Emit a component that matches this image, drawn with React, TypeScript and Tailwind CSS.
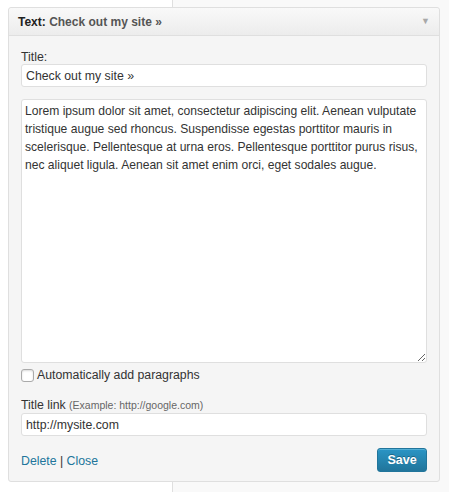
import { useState } from "react";

const FONT = { fontFamily: '"Liberation Sans", Arial, Helvetica, sans-serif' };

export default function App() {
    const [title, setTitle] = useState("Check out my site »");
    const [link, setLink] = useState("http://mysite.com");
    const [autoP, setAutoP] = useState(false);
    const [body, setBody] = useState(
        "Lorem ipsum dolor sit amet, consectetur adipiscing elit. Aenean vulputate tristique augue sed rhoncus. Suspendisse egestas porttitor mauris in scelerisque. Pellentesque at urna eros. Pellentesque porttitor purus risus, nec aliquet ligula. Aenean sit amet enim orci, eget sodales augue."
    );

    return (
        <div
            style={FONT}
            className="w-[449px] h-[492px] pt-[7px] pl-[8px] text-[12.3px] text-[#333] bg-[linear-gradient(to_right,#ffffff_172px,#dfdfdf_172px,#dfdfdf_173px,#f9f9f9_173px)]"
        >
            <div className="w-[432px] h-[475px] flex flex-col border border-[#dfdfdf] rounded-[3px] bg-[#f5f5f5]">
                {/* header */}
                <div className="h-[28px] shrink-0 flex items-center justify-between pl-[9px] pr-[9px] border-b border-[#dfdfdf] rounded-t-[3px] bg-[linear-gradient(to_bottom,#f9f9f9,#ececec)]">
                    <h3 className="font-bold text-[12px] leading-none text-[#222]">
                        Text: <span className="text-[#555]">Check out my site »</span>
                    </h3>
                    <span className="text-[#a8a8a8] text-[9px] leading-none">▼</span>
                </div>

                {/* body */}
                <div className="flex flex-col flex-1 px-[12px] pt-[14px]">
                    <label className="leading-[14px]">Title:</label>
                    <input
                        value={title}
                        onChange={(e) => setTitle(e.target.value)}
                        className="w-[406px] h-[23px] px-[4px] bg-white border border-[#dfdfdf] rounded-[3px] outline-none text-[12.3px] text-[#333]"
                    />

                    <textarea
                        value={body}
                        onChange={(e) => setBody(e.target.value)}
                        className="mt-[12px] w-[406px] h-[264px] pl-[3px] pr-[1px] pt-[2px] bg-white border border-[#dfdfdf] rounded-[3px] outline-none text-[12.1px] leading-[18px] text-[#333] resize-y"
                        spellCheck={false}
                    />

                    <label className="mt-[5px] flex items-center gap-[3px] leading-[15px]">
                        <input
                            type="checkbox"
                            checked={autoP}
                            onChange={() => setAutoP(!autoP)}
                            className="w-[13px] h-[13px] m-0 appearance-none bg-white border border-[#aaa] rounded-[3px] shadow-[inset_0_1px_2px_rgba(0,0,0,0.15)] checked:bg-[#21759b]"
                        />
                        Automatically add paragraphs
                    </label>

                    <div className="mt-[15px] leading-[15px]">
                        Title link <small className="text-[10.5px] text-[#666]">(Example: http://google.com)</small>
                    </div>
                    <input
                        value={link}
                        onChange={(e) => setLink(e.target.value)}
                        className="w-[406px] h-[23px] px-[4px] bg-white border border-[#dfdfdf] rounded-[3px] outline-none text-[12.3px] text-[#333]"
                    />

                    <div className="mt-[12px] flex items-center justify-between w-[406px]">
                        <div className="text-[#21759b] text-[12.3px] pt-[2px]">
                            <a href="#" className="hover:text-[#d54e21]">Delete</a>
                            <span className="text-[#333]"> | </span>
                            <a href="#" className="hover:text-[#d54e21]">Close</a>
                        </div>
                        <button className="w-[50px] h-[24px] rounded-[3px] border border-[#21759b] bg-[linear-gradient(to_bottom,#2a95c5,#21759b)] text-white font-bold text-[12.5px] shadow-[inset_0_1px_0_rgba(120,200,230,0.5)] [text-shadow:0_-1px_0_rgba(0,0,0,0.3)]">
                            Save
                        </button>
                    </div>
                </div>
            </div>
        </div>
    );
}
